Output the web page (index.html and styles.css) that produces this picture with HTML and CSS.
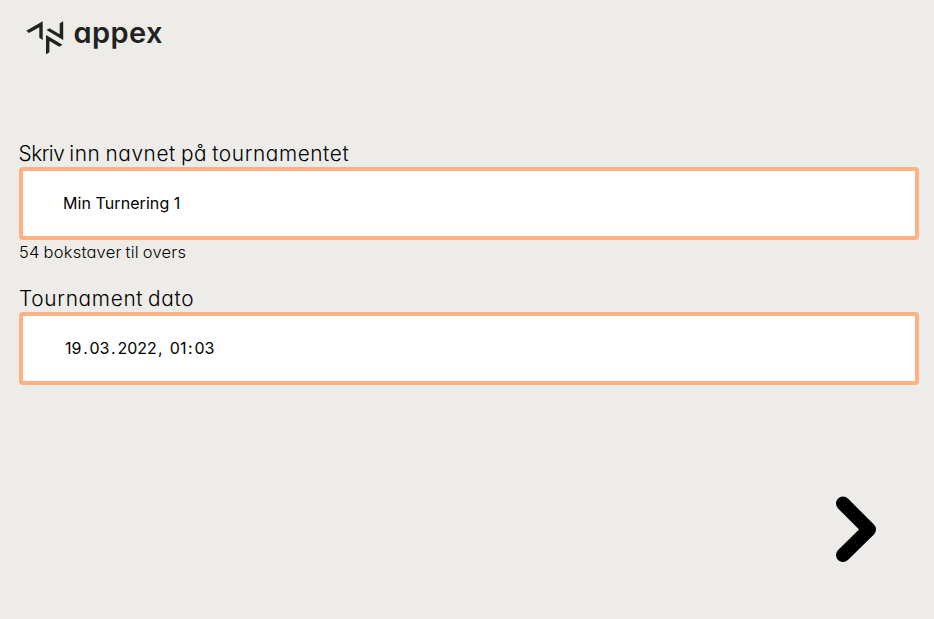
FILE: index.html
```html
<!DOCTYPE html>
<html lang="no">
<head>
<meta charset="utf-8">
<title>appex</title>
<link rel="stylesheet" href="styles.css">
</head>
<body>
<header class="brand">
  <svg class="mark" width="38" height="34" viewBox="26 20.5 38 34" aria-hidden="true">
    <path d="M26.3 30.3 42.7 20.8V39.5L39.3 37.3V26.8L29 32.4ZM46.5 29.5 49.5 27.8 59.7 33.7V22.8L63.2 20.8V39.5ZM46 34.5 62.5 44.3 59.3 46.3 49.4 40.5V51.8L46 53.8Z"/>
  </svg>
  <span class="word">appex</span>
</header>
<main class="form">
  <label class="label name-label" for="name"><span class="tight">Skriv</span> inn navnet på tournamentet</label>
  <div class="field" id="name"><span class="value">Min Turnering 1</span></div>
  <div class="hint">54 bokstaver til overs</div>
  <label class="label date-label" for="date">Tournament dato</label>
  <div class="field" id="date"><span class="date"><span class="day">19</span><i>.</i><span>03</span><i>.</i><span>2022</span><i class="comma">,</i><span class="hour">01</span><i>:</i><span>03</span></span></div>
</main>
<footer class="actions">
  <svg class="next" width="42" height="68" viewBox="835 495.5 42 68" role="img" aria-label="Neste">
    <path d="M843 504 869 530 843 555.5"/>
  </svg>
</footer>
</body>
</html>
```
FILE: styles.css
```css
* { box-sizing: border-box; }
body {
  margin: 0;
  height: 619px;
  overflow: hidden;
  background: #edece8;
  color: #000;
  font-family: Inter, "Open Sans", sans-serif;
  font-feature-settings: "cv11" 1;
}
.brand {
  display: flex;
  align-items: flex-start;
  height: 138px;
  padding: 20px 0 0 26px;
}
.mark { fill: #222; margin-top: 0.5px; }
.word {
  margin-left: 9.5px;
  color: #222;
  font-size: 29px;
  font-weight: 600;
  line-height: 26px;
  letter-spacing: 0.4px;
}
.form { padding: 0 15px 0 19px; }
.label {
  display: block;
  height: 29px;
  font-size: 20.8px;
  font-weight: 280;
  line-height: 31px;
  white-space: nowrap;
}
.name-label { letter-spacing: 0.6px; word-spacing: -1.4px; }
.tight { margin-left: -0.5px; letter-spacing: -0.5px; }
.date-label { letter-spacing: 0.7px; word-spacing: -1.8px; }
.field {
  display: flex;
  align-items: center;
  height: 73px;
  padding: 0 0 2px 40px;
  border: 4px solid #ffb184;
  border-radius: 4px;
  background: #fff;
  font-size: 16px;
}
.value { letter-spacing: 0.07px; }
.hint {
  height: 43px;
  font-size: 16.5px;
  font-weight: 300;
  line-height: 25px;
  letter-spacing: 0.25px;
  word-spacing: -1.1px;
}
.date { display: flex; padding-left: 2px; }
.date i { width: 8px; font-style: normal; text-align: center; }
.date .comma { width: 13px; padding-right: 6px; }
.actions {
  display: flex;
  justify-content: flex-end;
  padding: 110px 57px 0 0;
}
.next {
  fill: none;
  stroke: #000;
  stroke-width: 14;
  stroke-linecap: round;
  stroke-linejoin: round;
}
```
